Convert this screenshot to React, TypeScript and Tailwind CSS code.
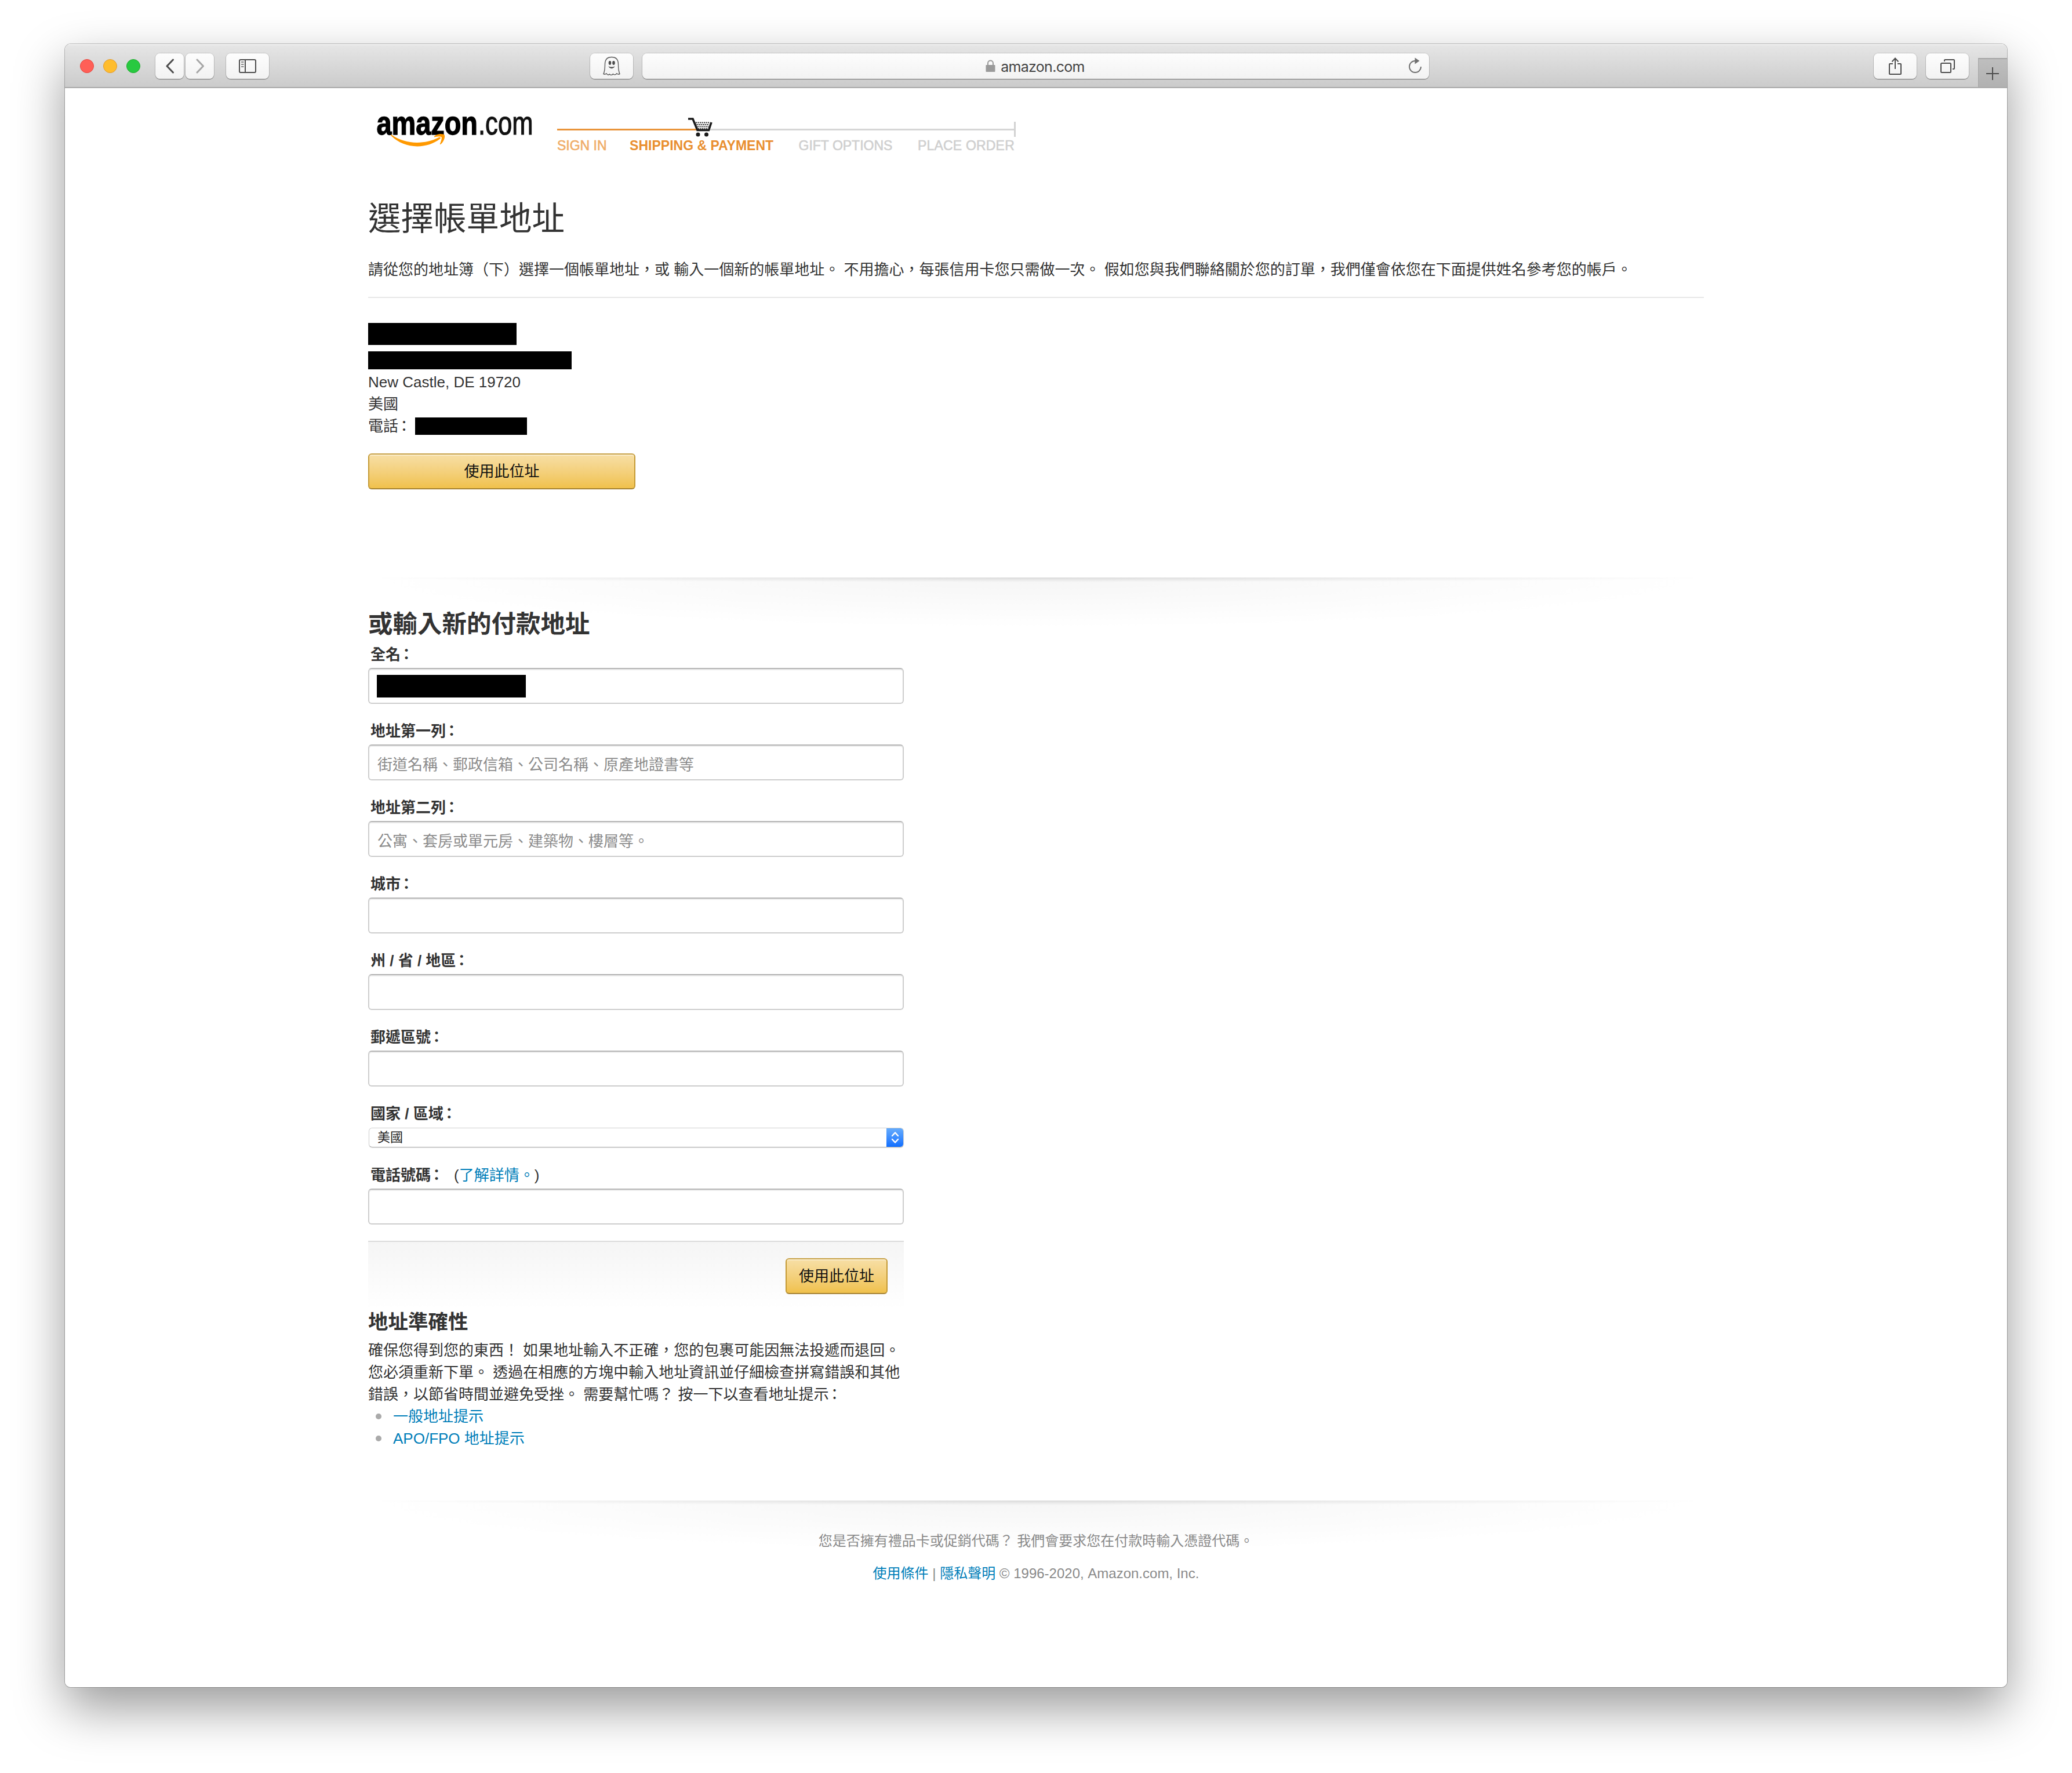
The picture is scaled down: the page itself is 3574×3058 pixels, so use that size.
import type { ReactNode } from "react";
import clsx from "clsx";

const TEXT_FIELDS = [
  { id: "line1", label: "地址第一列", placeholder: "街道名稱、郵政信箱、公司名稱、原產地證書等" },
  { id: "line2", label: "地址第二列", placeholder: "公寓、套房或單元房、建築物、樓層等。" },
  { id: "city", label: "城市", placeholder: "" },
  { id: "state", label: "州 / 省 / 地區", placeholder: "" },
  { id: "zip", label: "郵遞區號", placeholder: "" },
];

const HINT_LINKS = ["一般地址提示", "APO/FPO 地址提示"];

function ToolbarButton({ className, children }: { className?: string; children?: ReactNode }) {
  return (
    <div
      className={clsx(
        "flex h-11 shrink-0 items-center justify-center rounded-lg bg-linear-to-b from-[#fdfdfd] to-[#f2f2f2] shadow-[0_0_0_1px_rgba(0,0,0,0.12),0_1px_1px_rgba(0,0,0,0.4)]",
        className,
      )}
    >
      {children}
    </div>
  );
}

function Toolbar() {
  return (
    <div className="flex h-[76px] items-start border-b-2 border-[#a9a9a9] bg-linear-to-b from-[#e6e6e6] to-[#cbcbcb] shadow-[inset_0_2px_0_#f3f3f3]">
      <div className="flex gap-4 pt-[26px] pl-[26px]">
        <span className="size-6 rounded-full border border-[#e8443c] bg-[#ff5f57]" />
        <span className="size-6 rounded-full border border-[#e29a2c] bg-[#ffbd2e]" />
        <span className="size-6 rounded-full border border-[#1eab2c] bg-[#28c940]" />
      </div>
      <div className="flex gap-[3px] pt-4 pl-[26px]">
        <ToolbarButton className="w-[49px]">
          <svg width="16" height="26" viewBox="0 0 16 26" fill="none" stroke="#4d4d4d" strokeWidth="3" strokeLinecap="round" strokeLinejoin="round">
            <path d="M13.500 2 L3 13 L13.500 24" />
          </svg>
        </ToolbarButton>
        <ToolbarButton className="w-[49px]">
          <svg width="16" height="26" viewBox="0 0 16 26" fill="none" stroke="#a6a6a6" strokeWidth="3" strokeLinecap="round" strokeLinejoin="round">
            <path d="M3 2 L13.500 13 L3 24" />
          </svg>
        </ToolbarButton>
      </div>
      <div className="pt-4 pl-[21px]">
        <ToolbarButton className="w-[74px]">
          <svg width="30" height="24" viewBox="0 0 30 24" fill="none" stroke="#4d4d4d" strokeWidth="2">
            <rect x="1" y="1" width="28" height="22" rx="2" />
            <path d="M11 1 V23" />
            <path d="M4 5 H8.500 M4 9 H8.500 M4 13 H8.500" stroke="#888" />
          </svg>
        </ToolbarButton>
      </div>
      <div className="flex gap-4 pt-4 pl-[554px]">
        <ToolbarButton className="w-[74px]">
          <svg width="30" height="34" viewBox="0 0 30 34" fill="none" stroke="#5a5a5a" strokeWidth="1.400" strokeLinejoin="round">
            <path d="M3.500 14 C3.500 5.500 8 1.500 15 1.500 C22 1.500 26.500 5.500 26.500 14 C26.500 22 27 26 29 30.500 C27 31.500 25 31 23.500 29.800 C22 32.500 19.500 32.500 17.500 30.500 C16 32.800 13 33 11.500 30.800 C9.500 33 7.500 32.500 6.200 29.800 C4.500 31.300 3 31.300 1 30.500 C3 26 3.500 22 3.500 14 Z" />
            <ellipse cx="12" cy="11.500" rx="2.300" ry="3.400" fill="#4d4d4d" stroke="none" />
            <ellipse cx="18.500" cy="11.500" rx="2.300" ry="3.400" fill="#4d4d4d" stroke="none" />
            <path d="M9.500 17 C12 19 18 19 20.500 17 C19 22.500 11 22.500 9.500 17 Z" fill="#4d4d4d" stroke="none" />
          </svg>
        </ToolbarButton>
        <ToolbarButton className="w-[1357px] pr-3 pl-[34px]">
          <div className="flex flex-1 items-center justify-center gap-[9px]">
            <svg width="17" height="22" viewBox="0 0 17 22">
              <path d="M4 10 V6 C4 0 13 0 13 6 V10" fill="none" stroke="#9a9a9a" strokeWidth="2" />
              <rect x="0.500" y="9" width="16" height="12" rx="1" fill="#9a9a9a" />
            </svg>
            <span className="pt-0.5 font-[Inter,sans-serif] text-[25px] leading-[32px] tracking-[-0.7px] text-[#444]">amazon.com</span>
          </div>
          <svg width="24" height="28" viewBox="0 0 24 28" className="-mt-0.5">
            <path d="M12 6 A10 10 0 1 0 22 16" fill="none" stroke="#6f6f6f" strokeWidth="1.900" />
            <path d="M11.500 0.500 L19.500 6 L11.500 11.500 Z" fill="#6f6f6f" />
          </svg>
        </ToolbarButton>
      </div>
      <div className="ml-auto flex gap-4 pt-4">
        <ToolbarButton className="w-[74px]">
          <svg width="24" height="32" viewBox="0 0 24 32" fill="none" stroke="#4d4d4d" strokeWidth="2">
            <path d="M8 12 H3 Q2 12 2 13 V29 Q2 30 3 30 H21 Q22 30 22 29 V13 Q22 12 21 12 H16" />
            <path d="M12 21 V2 M6.500 8.500 L12 2.500 L17.500 8.500" />
          </svg>
        </ToolbarButton>
        <ToolbarButton className="w-[74px]">
          <svg width="26" height="26" viewBox="0 0 26 26" fill="none" stroke="#4d4d4d" strokeWidth="2">
            <rect x="2" y="8" width="17" height="16" rx="1.500" />
            <path d="M8 5 V3 Q8 2 9 2 H24 Q25 2 25 3 V17 Q25 18 24 18 H22" />
          </svg>
        </ToolbarButton>
      </div>
      <div className="mt-6 ml-4 flex h-[50px] w-[50px] items-center justify-center border-t-2 border-l border-[#a6a6a6] bg-linear-to-b from-[#bebebe] to-[#b1b1b1] pt-0.5 pr-0.5">
        <svg width="22" height="22" viewBox="0 0 22 22" stroke="#4d4d4d" strokeWidth="2">
          <path d="M11 0 V22 M0 11 H22" />
        </svg>
      </div>
    </div>
  );
}

function AmazonLogo() {
  return (
    <svg width="284" height="84" viewBox="0 0 284 84" className="mt-[25px] ml-3 shrink-0">
      <g fontFamily="'Liberation Sans', Arial, sans-serif" fontSize="58">
        <text transform="translate(2.500 54.500) scale(0.808 1)" fontWeight="bold" fill="#000" stroke="#000" strokeWidth="1.400">
          amazon
        </text>
        <text transform="translate(178 54.500) scale(0.752 1)" fill="#111" stroke="#111" strokeWidth="1.200">
          .com
        </text>
      </g>
      <path d="M28.500 55.500 C52 72 84 73 110 60 C112.500 59 114 61 112 62.500 C88 81 50 80 27.500 57 C26.500 55.500 27.500 55 28.500 55.500 Z" fill="#f90" />
      <path d="M102 58 C108 52.500 117 53.500 119.500 55.500 C121.500 60 118 68 113.500 71.500 C112.500 72.500 111.500 72 112 71 C114 66 115.500 61 114.500 59.500 C113 58 107 58.500 103 59.500 C102 59.500 101.500 58.500 102 58 Z" fill="#f90" />
    </svg>
  );
}

function CheckoutSteps() {
  return (
    <div className="relative ml-[30px] w-[791px] shrink-0 pt-[58px] font-['Liberation_Sans',Arial,sans-serif] text-[23px] leading-[28px]">
      <div className="flex h-[26px] items-center">
        <span className="h-[3px] w-60 bg-[#e9943a]" />
        <span className="h-[3px] flex-1 bg-[#d6d6d6]" />
        <span className="h-[26px] w-[3px] bg-[#d2d2d2]" />
      </div>
      <div className="flex justify-between pt-px pr-0.5 whitespace-nowrap">
        <span className="text-[#f0ad68] [-webkit-text-stroke:0.6px]">SIGN IN</span>
        <span className="-ml-1 font-bold text-[#e98f30]">SHIPPING &amp; PAYMENT</span>
        <span className="text-[#cfcfcf] [-webkit-text-stroke:0.6px]">GIFT OPTIONS</span>
        <span className="tracking-[0.2px] text-[#cfcfcf] [-webkit-text-stroke:0.6px]">PLACE ORDER</span>
      </div>
      <svg width="44" height="34" viewBox="0 0 44 34" className="absolute top-[50px] left-[225px]">
        <path d="M12 7 H42 L37 24 H17 Z" fill="#fff" />
        <path d="M14 9.500 H38 M15.500 13 H37 M17 16.500 H36 M18 20 H35" stroke="#333" strokeWidth="1.800" strokeDasharray="2.200 1.300" />
        <path d="M1 3 H9 L17 22.500 H36.500 L41 9" fill="none" stroke="#1a1a1a" strokeWidth="3.600" />
        <circle cx="18" cy="30" r="3.500" fill="#1a1a1a" />
        <circle cx="32.500" cy="30" r="3.500" fill="#1a1a1a" />
      </svg>
    </div>
  );
}

function Colon() {
  return <span className="mr-[3px] -ml-[3px]">：</span>;
}

function GoldButton({ className, children }: { className?: string; children: ReactNode }) {
  return (
    <button
      className={clsx(
        "block h-[62px] rounded-md border-2 border-t-[#c9a44d] border-r-[#c49a35] border-b-[#a58233] border-l-[#c49a35] bg-linear-to-b from-[#f7dfa5] to-[#f0c14b] text-[26px] leading-[38px] text-[#111] shadow-[inset_0_2px_0_rgba(255,255,255,0.4)]",
        className,
      )}
    >
      {children}
    </button>
  );
}

function Label({ text, children }: { text: string; children?: ReactNode }) {
  return (
    <div className="mb-[5px] pl-1 leading-[36px] font-bold">
      {text}
      <Colon />
      {children}
    </div>
  );
}

function TextInput({ placeholder, children }: { placeholder?: string; children?: ReactNode }) {
  return (
    <div className="flex h-[62px] w-[924px] items-center rounded-md border-2 border-[#cdcdcd] border-t-[#b5b5b5] bg-white pl-3 shadow-[inset_0_2px_0_#ececec]">
      {placeholder && <span className="pt-[7px] pl-0.5 leading-[38px] text-[#8c8c8c]">{placeholder}</span>}
      {children}
    </div>
  );
}

function Link({ children }: { children: ReactNode }) {
  return (
    <a href="#" className="text-[#007eb9]">
      {children}
    </a>
  );
}

// soft grey line that fades towards both ends, with a glow below it
const FADE_DIVIDER =
  "bg-[radial-gradient(51%_100%_at_50%_0%,rgba(0,0,0,0.11),transparent),radial-gradient(51%_100%_at_50%_0%,rgba(0,0,0,0.04),transparent)] bg-[length:100%_8px,100%_88px] bg-no-repeat";

function SavedAddress() {
  return (
    <section>
      <div className="mt-[43px] h-[38px] w-64 bg-black" />
      <div className="mt-[11px] h-[31px] w-[351px] bg-black" />
      <div className="mt-[3px]">New Castle, DE 19720</div>
      <div>美國</div>
      <div className="flex items-center">
        電話
        <Colon />
        <span className="ml-[3px] h-[30px] w-[193px] bg-black" />
      </div>
      <GoldButton className="mt-7 w-[461px]">使用此位址</GoldButton>
    </section>
  );
}

function AddressForm() {
  return (
    <section className={clsx("mt-[152px] pt-[54px]", FADE_DIVIDER)}>
      <h2 className="mb-[7px] text-[42.5px] leading-[54px] font-bold">或輸入新的付款地址</h2>
      <div className="w-[924px]">
        <Label text="全名" />
        <TextInput>
          <span className="ml-px h-[39px] w-[257px] bg-black" />
        </TextInput>
        {TEXT_FIELDS.map((field) => (
          <div key={field.id} className="mt-[29px]">
            <Label text={field.label} />
            <TextInput placeholder={field.placeholder} />
          </div>
        ))}
        <div className="mt-[29px]">
          <Label text="國家 / 區域" />
          <div className="mt-1.5 ml-px flex h-[34px] w-[923px] items-center overflow-hidden rounded-md border border-[#cfcfcf] border-b-[#b0b0b0] bg-white pl-[14px] text-[22px] leading-[30px] text-[#222] shadow-[0_1px_1px_rgba(0,0,0,0.12)]">
            <span className="flex-1">美國</span>
            <span className="-my-px -mr-px flex h-[34px] w-[30px] items-center justify-center bg-linear-to-b from-[#67adfc] to-[#0a6cff]">
              <svg width="14" height="22" viewBox="0 0 14 22" fill="none" stroke="#fff" strokeWidth="2.400" strokeLinecap="round" strokeLinejoin="round">
                <path d="M2 8 L7 2.500 L12 8 M2 14 L7 19.500 L12 14" />
              </svg>
            </span>
          </div>
        </div>
        <div className="mt-[30px]">
          <Label text="電話號碼">
            <span className="pl-[14px] font-normal">
              (<Link>了解詳情。</Link>)
            </span>
          </Label>
          <TextInput />
        </div>
        <div className="mt-7 flex h-[119px] justify-end border-t-2 border-[#dcdcdc] bg-linear-to-b from-[#f5f5f5] to-white pt-7 pr-7">
          <GoldButton className="w-44">使用此位址</GoldButton>
        </div>
        <h3 className="text-[34.5px] leading-[42px] font-bold">地址準確性</h3>
        <p className="mt-[9px] whitespace-nowrap">
          確保您得到您的東西！ 如果地址輸入不正確，您的包裹可能因無法投遞而退回。
          <br />
          您必須重新下單。 透過在相應的方塊中輸入地址資訊並仔細檢查拼寫錯誤和其他
          <br />
          錯誤，以節省時間並避免受挫。 需要幫忙嗎？ 按一下以查看地址提示
          <Colon />
        </p>
        <ul>
          {HINT_LINKS.map((hint) => (
            <li key={hint} className="flex items-center pl-[13px]">
              <span className="mr-[20px] size-[10px] rounded-full bg-[#aaa]" />
              <Link>{hint}</Link>
            </li>
          ))}
        </ul>
      </div>
    </section>
  );
}

function Footer() {
  return (
    <footer className={clsx("mt-[88px] pt-[51px] text-center text-2xl text-[#8a8a8a]", FADE_DIVIDER)}>
      <p className="leading-[38px]">您是否擁有禮品卡或促銷代碼？ 我們會要求您在付款時輸入憑證代碼。</p>
      <p className="mt-[18px] leading-[38px]">
        <Link>使用條件</Link> | <Link>隱私聲明</Link> © 1996-2020, Amazon.com, Inc.
      </p>
    </footer>
  );
}

export default function App() {
  return (
    <div className="h-[3058px] w-[3574px] overflow-hidden bg-white pt-[76px] pl-28">
      <div className="h-[2834px] w-[3350px] rounded-[10px] shadow-[0_0_0_1px_rgba(0,0,0,0.25),0_36px_86px_rgba(0,0,0,0.4)]">
        <div className="h-full overflow-hidden rounded-[10px] bg-white">
          <Toolbar />
          <main
            lang="zh-TW"
            className="mx-auto w-[2304px] font-['Liberation_Sans','Noto_Sans_CJK_TC',sans-serif] text-[26px] leading-[38px] text-[#333]"
          >
            <header className="flex h-[190px] items-start">
              <AmazonLogo />
              <CheckoutSteps />
            </header>
            <h1 className="text-[56.5px] leading-[72px]">選擇帳單地址</h1>
            <p className="mt-8 border-b-2 border-[#e7e7e7] pb-7">
              請從您的地址簿（下）選擇一個帳單地址，或 輸入一個新的帳單地址。 不用擔心，每張信用卡您只需做一次。
              假如您與我們聯絡關於您的訂單，我們僅會依您在下面提供姓名參考您的帳戶。
            </p>
            <SavedAddress />
            <AddressForm />
            <Footer />
          </main>
        </div>
      </div>
    </div>
  );
}
